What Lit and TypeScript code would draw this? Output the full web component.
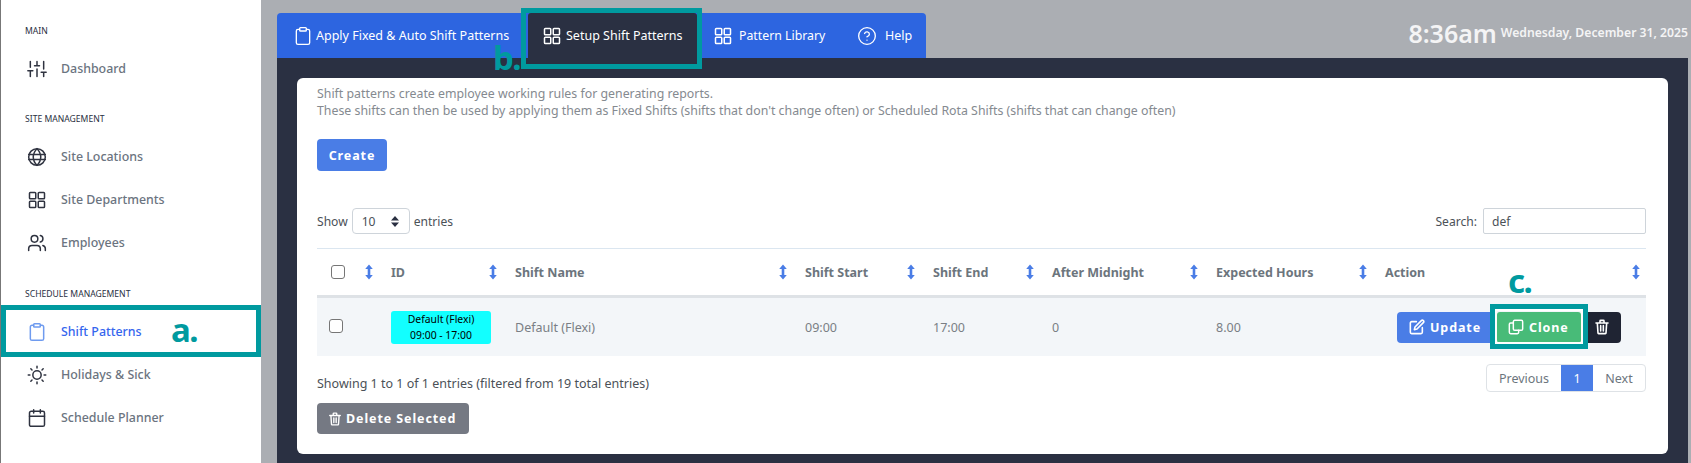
import { LitElement, html, css, svg } from "lit";
import { customElement } from "lit/decorators.js";

const ic = (body: unknown, size = 20, sw = 2) => html`<svg class="ic" width=${size} height=${size} viewBox="0 0 24 24" fill="none" stroke="currentColor" stroke-width=${sw} stroke-linecap="round" stroke-linejoin="round">${body}</svg>`;

const sliders = svg`<path d="M4 21v-7M4 10V3M12 21v-9M12 8V3M20 21v-5M20 12V3M1 14h6M9 8h6M17 16h6"/>`;
const globe = svg`<circle cx="12" cy="12" r="10"/><path d="M2 9h20M2 15h20M12 2c-6 6-6 14 0 20M12 2c6 6 6 14 0 20"/>`;
const grid = svg`<rect x="3" y="3" width="7.5" height="7.5" rx="1"/><rect x="13.5" y="3" width="7.5" height="7.5" rx="1"/><rect x="3" y="13.5" width="7.5" height="7.5" rx="1"/><rect x="13.5" y="13.5" width="7.5" height="7.5" rx="1"/>`;
const users = svg`<circle cx="9" cy="7" r="4"/><path d="M2 21v-2a4 4 0 0 1 4-4h6a4 4 0 0 1 4 4v2M16 3.1a4 4 0 0 1 0 7.8M22 21v-2a4 4 0 0 0-3-3.9"/>`;
const clip = svg`<path d="M8 4H6a2 2 0 0 0-2 2v14a2 2 0 0 0 2 2h12a2 2 0 0 0 2-2V6a2 2 0 0 0-2-2h-2"/><rect x="8" y="2" width="8" height="4" rx="1"/>`;
const sun = svg`<circle cx="12" cy="12" r="5"/><path d="M12 1.5v2M12 20.5v2M4.6 4.6 6 6M18 18l1.4 1.4M1.5 12h2M20.5 12h2M4.6 19.4 6 18M18 6l1.4-1.4"/>`;
const cal = svg`<rect x="3" y="4" width="18" height="18" rx="2"/><path d="M16 2v4M8 2v4M3 10h18"/>`;
const help = svg`<circle cx="12" cy="12" r="10"/><path d="M9.1 9a3 3 0 0 1 5.8 1c0 2-3 3-3 3M12 17h.01"/>`;
const edit = svg`<path d="M11 4H4a2 2 0 0 0-2 2v14a2 2 0 0 0 2 2h14a2 2 0 0 0 2-2v-7"/><path d="M18.5 2.5a2.1 2.1 0 0 1 3 3L12 15l-4 1 1-4z"/>`;
const copy = svg`<rect x="8" y="2" width="14" height="15" rx="2"/><path d="M8 6H4a2 2 0 0 0-2 2v12a2 2 0 0 0 2 2h10a2 2 0 0 0 2-2v-3"/>`;
const trash = svg`<path d="M3 6h18M9 6V3a1 1 0 0 1 1-1h4a1 1 0 0 1 1 1v3M5 6l1 15a1 1 0 0 0 1 1h10a1 1 0 0 0 1-1l1-15M10 10v8M14 10v8"/>`;

const sort = html`<svg class="sort" width="8" height="16" viewBox="0 0 8 16"><path d="M4 .5 7.8 5H5.3v6h2.5L4 15.5.2 11h2.5V5H.2z" fill="currentColor"/></svg>`;

const nav = [
  { label: "MAIN", items: [["Dashboard", sliders]] },
  { label: "SITE MANAGEMENT", items: [["Site Locations", globe], ["Site Departments", grid], ["Employees", users]] },
  { label: "SCHEDULE MANAGEMENT", items: [["Shift Patterns", clip, true], ["Holidays & Sick", sun], ["Schedule Planner", cal]] },
];

const heads = ["ID", "Shift Name", "Shift Start", "Shift End", "After Midnight", "Expected Hours", "Action"];

@customElement("app-root")
export class AppRoot extends LitElement {
  static styles = css`
    :host { display: block; position: relative; width: 1691px; height: 463px; overflow: hidden; background: #abaeb3; font-family: "Noto Sans", "Open Sans", sans-serif; font-size: 12.5px; color: #4b5157; }
    * { box-sizing: border-box; }
    .ic { flex: none; display: block; }
    .page { display: flex; height: 100%; }
    .side { width: 261px; flex: none; height: 100%; background: #fff; border-left: 1px solid #777; padding: 23px 0 0; }
    .side section + section { margin-top: 21px; }
    .side section:last-child { margin-top: 22px; }
    .side h6 { margin: 0 0 8px; padding-left: 24px; height: 16px; line-height: 16px; font-size: 8.6px; font-weight: 400; color: #2a3042; }
    .item { height: 43px; display: flex; align-items: center; gap: 14px; padding-left: 26px; font-size: 12.4px; font-weight: 500; color: #6b7480; }
    .item .ic { color: #2f3340; }
    .item.on { color: #3566ee; }
    .item.on .ic { color: #6f9bef; }
    .main { flex: 1; min-width: 0; padding: 13px 3px 0 16px; display: flex; flex-direction: column; }
    .top { display: flex; justify-content: space-between; align-items: flex-start; height: 45px; }
    .tabs { display: flex; height: 45px; background: #2d65e0; border-radius: 4px 4px 0 0; color: #fff; font-size: 12.5px; }
    .tab { display: flex; align-items: center; gap: 4px; }
    .tab1 { width: 251px; padding-left: 16px; gap: 3px; }
    .tab2 { width: 169px; padding-left: 14px; background: #2a3042; border-radius: 3px 3px 0 0; gap: 4px; }
    .tab3 { width: 143px; padding-left: 16px; gap: 6px; }
    .tab3 span { font-size: 12.3px; }
    .tab4 { width: 86px; padding-left: 17px; gap: 8px; }
    .clock { display: flex; align-items: center; gap: 4px; color: #f4f4f5; margin-top: 2px; height: 36px; }
    .time { font-size: 25px; font-weight: 600; line-height: 36px; }
    .date { font-size: 12.2px; font-weight: 600; margin-top: -2px; }
    .panel { flex: 1; background: #2a3042; padding: 20px 20px 9px; }
    .card { height: 100%; background: #fff; border-radius: 6px; padding: 8px 22px 0 20px; }
    .intro { margin: 0; line-height: 16.5px; color: #858a90; font-size: 12.35px; }
    .btn { display: flex; align-items: center; border-radius: 4px; color: #fff; font-weight: 700; font-size: 12.5px; letter-spacing: .9px; }
    .create { margin-top: 20px; width: 70px; height: 32px; justify-content: center; background: #4a7de6; }
    .controls { margin-top: 37px; display: flex; justify-content: space-between; align-items: center; height: 26px; }
    .len, .search { display: flex; align-items: center; gap: 4px; font-size: 12.1px; }
    .select { width: 58px; height: 26px; border: 1px solid #ced4da; border-radius: 4px; display: flex; align-items: center; justify-content: space-between; padding: 0 10px 0 9px; }
    .search { gap: 6px; }
    .input { width: 163px; height: 26px; border: 1px solid #ced4da; border-radius: 2px; display: flex; align-items: center; padding-left: 8px; }
    .table { margin-top: 14px; display: grid; grid-template-columns: 74px 124px 290px 128px 119px 164px 169px 261px; border-top: 1px solid #dbe6f0; }
    .th { height: 46px; border-bottom: 3px solid #dee2e6; box-sizing: content-box; display: flex; align-items: center; justify-content: space-between; padding-right: 18px; font-weight: 700; color: #6c757d; }
    .sort { color: #4a7de6; flex: none; }
    .th:first-child { padding-left: 14px; }
    .th:nth-child(8) { padding-right: 6px; }
    .check { width: 14px; height: 14px; border: 1px solid #767676; border-radius: 3px; background: #fff; }
    .td { height: 58px; background: #f3f6f9; display: flex; align-items: center; color: #7a7f85; }
    .td.pick { padding: 0 0 3px 12px; }
    .badge { width: 100px; height: 33px; background: #12ffff; border-radius: 3px; color: #000; font-size: 10.4px; line-height: 16px; text-align: center; display: flex; flex-direction: column; justify-content: center; }
    .act { justify-content: flex-end; padding-right: 25px; }
    .act .btn { height: 31px; }
    .up { width: 100px; padding-left: 12px; gap: 5px; background: #4a7de6; border-radius: 4px 0 0 4px; }
    .cl { width: 84px; padding-left: 11px; gap: 5px; background: #48bb78; border-radius: 3px; }
    .tr { width: 40px; justify-content: flex-end; padding-right: 11px; background: #1f2433; border-radius: 0 4px 4px 0; }
    .foot { margin-top: 8px; display: flex; justify-content: space-between; align-items: flex-end; height: 28px; }
    .foot .info { line-height: 16px; }
    .pager { display: flex; height: 28px; border: 1px solid #dee2e6; border-radius: 4px; color: #6c757d; }
    .pager span { display: flex; align-items: center; justify-content: center; }
    .pager .p { width: 74px; }
    .pager .n { width: 32px; background: #4a7de6; color: #fff; }
    .pager .x { width: 52px; }
    .del { margin-top: 11px; width: 152px; height: 31px; padding-left: 11px; gap: 4px; background: #757983; }
    .mark { position: absolute; border: 5px solid #009a9f; }
    .mark.a { left: 1px; top: 305px; width: 260px; height: 52px; }
    .mark.b { left: 521px; top: 8px; width: 181px; height: 61px; }
    .mark.c { left: 1490px; top: 304px; width: 98px; height: 45px; box-shadow: inset 0 0 0 2px #fff; }
    .lab { position: absolute; color: #009a9f; font-weight: 700; font-size: 33px; line-height: 26px; letter-spacing: -1.5px; }
    .lab.a { left: 171px; top: 317px; }
    .lab.b { left: 493px; top: 45px; }
    .lab.c { left: 1508px; top: 268px; }
  `;

  render() {
    return html`
      <div class="page">
        <aside class="side">
          ${nav.map((s) => html`<section>
            <h6>${s.label}</h6>
            ${s.items.map((i) => html`<div class="item ${i[2] ? "on" : ""}">${ic(i[1], 20, 1.8)}<span>${i[0]}</span></div>`)}
          </section>`)}
        </aside>
        <div class="main">
          <div class="top">
            <nav class="tabs">
              <div class="tab tab1">${ic(clip, 20, 1.6)}<span>Apply Fixed &amp; Auto Shift Patterns</span></div>
              <div class="tab tab2">${ic(grid, 20, 1.8)}<span>Setup Shift Patterns</span></div>
              <div class="tab tab3">${ic(grid, 20, 1.8)}<span>Pattern Library</span></div>
              <div class="tab tab4">${ic(help, 20, 1.6)}<span>Help</span></div>
            </nav>
            <div class="clock"><span class="time">8:36am</span><span class="date">Wednesday, December 31, 2025</span></div>
          </div>
          <div class="panel">
            <div class="card">
              <p class="intro">Shift patterns create employee working rules for generating reports.<br>These shifts can then be used by applying them as Fixed Shifts (shifts that don't change often) or Scheduled Rota Shifts (shifts that can change often)</p>
              <div class="btn create">Create</div>
              <div class="controls">
                <div class="len">Show <div class="select"><span>10</span><svg width="8" height="11" viewBox="0 0 8 11"><path d="M4 0 8 4.4H0zM4 11 0 6.6h8z" fill="#2a3042"/></svg></div> entries</div>
                <div class="search">Search: <div class="input">def</div></div>
              </div>
              <div class="table">
                <div class="th"><span class="check"></span>${sort}</div>
                ${heads.map((h) => html`<div class="th"><span>${h}</span>${sort}</div>`)}
                <div class="td pick"><span class="check"></span></div>
                <div class="td"><div class="badge"><span>Default (Flexi)</span><span>09:00 - 17:00</span></div></div>
                <div class="td">Default (Flexi)</div>
                <div class="td">09:00</div>
                <div class="td">17:00</div>
                <div class="td">0</div>
                <div class="td">8.00</div>
                <div class="td act">
                  <div class="btn up">${ic(edit, 16, 2.4)}Update</div>
                  <div class="btn cl">${ic(copy, 16, 2.2)}Clone</div>
                  <div class="btn tr">${ic(trash, 16, 2.4)}</div>
                </div>
              </div>
              <div class="foot">
                <span class="info">Showing 1 to 1 of 1 entries (filtered from 19 total entries)</span>
                <div class="pager"><span class="p">Previous</span><span class="n">1</span><span class="x">Next</span></div>
              </div>
              <div class="btn del">${ic(trash, 14, 2.4)}Delete Selected</div>
            </div>
          </div>
        </div>
      </div>
      <div class="mark a"></div><span class="lab a">a.</span>
      <div class="mark b"></div><span class="lab b">b.</span>
      <div class="mark c"></div><span class="lab c">c.</span>
    `;
  }
}
